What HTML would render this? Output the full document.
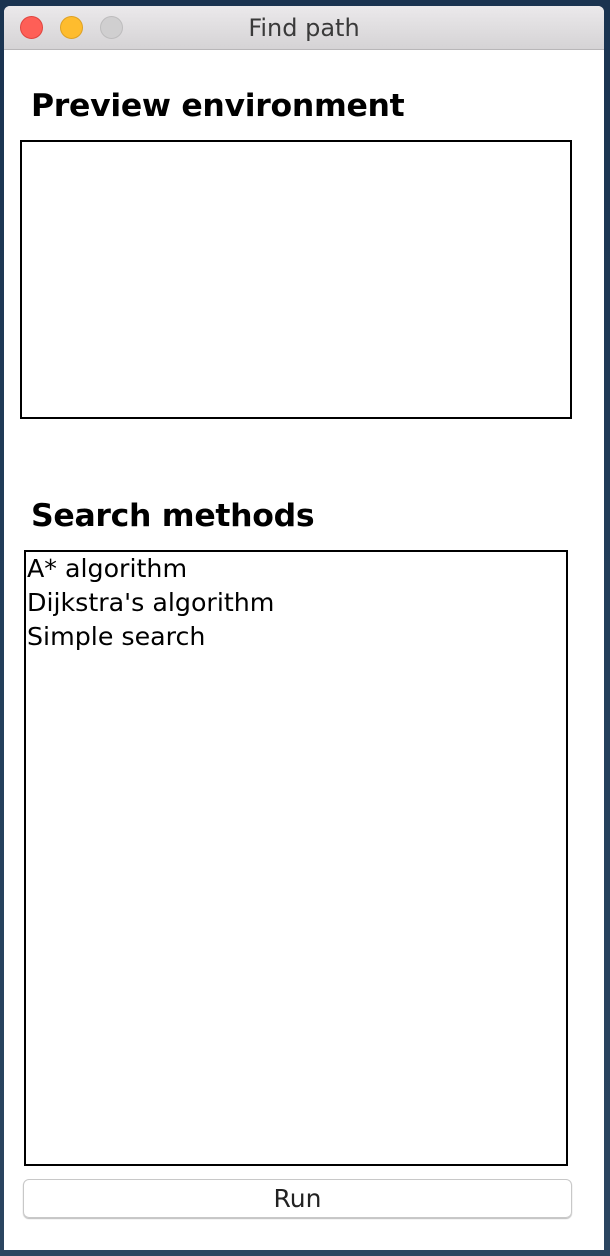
<!DOCTYPE html>
<html><head><style>
body{margin:0;width:610px;height:1256px;background:linear-gradient(180deg,#1a3350,#24405c 60%,#2b4560);position:relative;overflow:hidden;font-family:"DejaVu Sans",sans-serif}
.win{position:absolute;left:4px;top:6px;width:600px;height:1244px;background:#fff;border-radius:6px 6px 0 0;overflow:hidden}
.tb{height:43px;background:linear-gradient(#ebe9eb,#d5d3d5);border-bottom:1px solid #b8b6b8;position:relative}
.tb .t{position:absolute;left:0;right:0;top:8px;text-align:center;font-size:24px;color:#3a3a3a}
.d{position:absolute;top:10px;width:23px;height:23px;border-radius:50%;box-sizing:border-box}
h2{position:absolute;margin:0;font-size:31.5px;font-weight:bold;color:#000;left:27px;letter-spacing:-0.3px}
.box{position:absolute;border:2px solid #000;box-sizing:border-box}
.li{font-size:25.3px;line-height:34px;color:#000;padding-left:1px;margin-top:0px}
.btn{position:absolute;left:19px;top:1173px;width:549px;height:39px;border:1px solid #c8c8c8;border-radius:6px;box-sizing:border-box;box-shadow:0 1px 1px #bbb;text-align:center;font-size:25px;line-height:37px;color:#222}
</style></head><body>
<div class="win">
<div class="tb"><div class="d" style="left:16px;background:#fe5f57;border:1px solid #e0443e"></div><div class="d" style="left:56px;background:#febc2e;border:1px solid #dea123"></div><div class="d" style="left:96px;background:#d0cfd0;border:1px solid #bdbcbd"></div><div class="t">Find path</div></div>
<h2 style="top:82px">Preview environment</h2>
<div class="box" style="left:16px;top:134px;width:552px;height:279px"></div>
<h2 style="top:492px">Search methods</h2>
<div class="box" style="left:20px;top:544px;width:544px;height:616px"><div class="li">A* algorithm<br>Dijkstra's algorithm<br>Simple search</div></div>
<div class="btn">Run</div>
</div>
</body></html>
